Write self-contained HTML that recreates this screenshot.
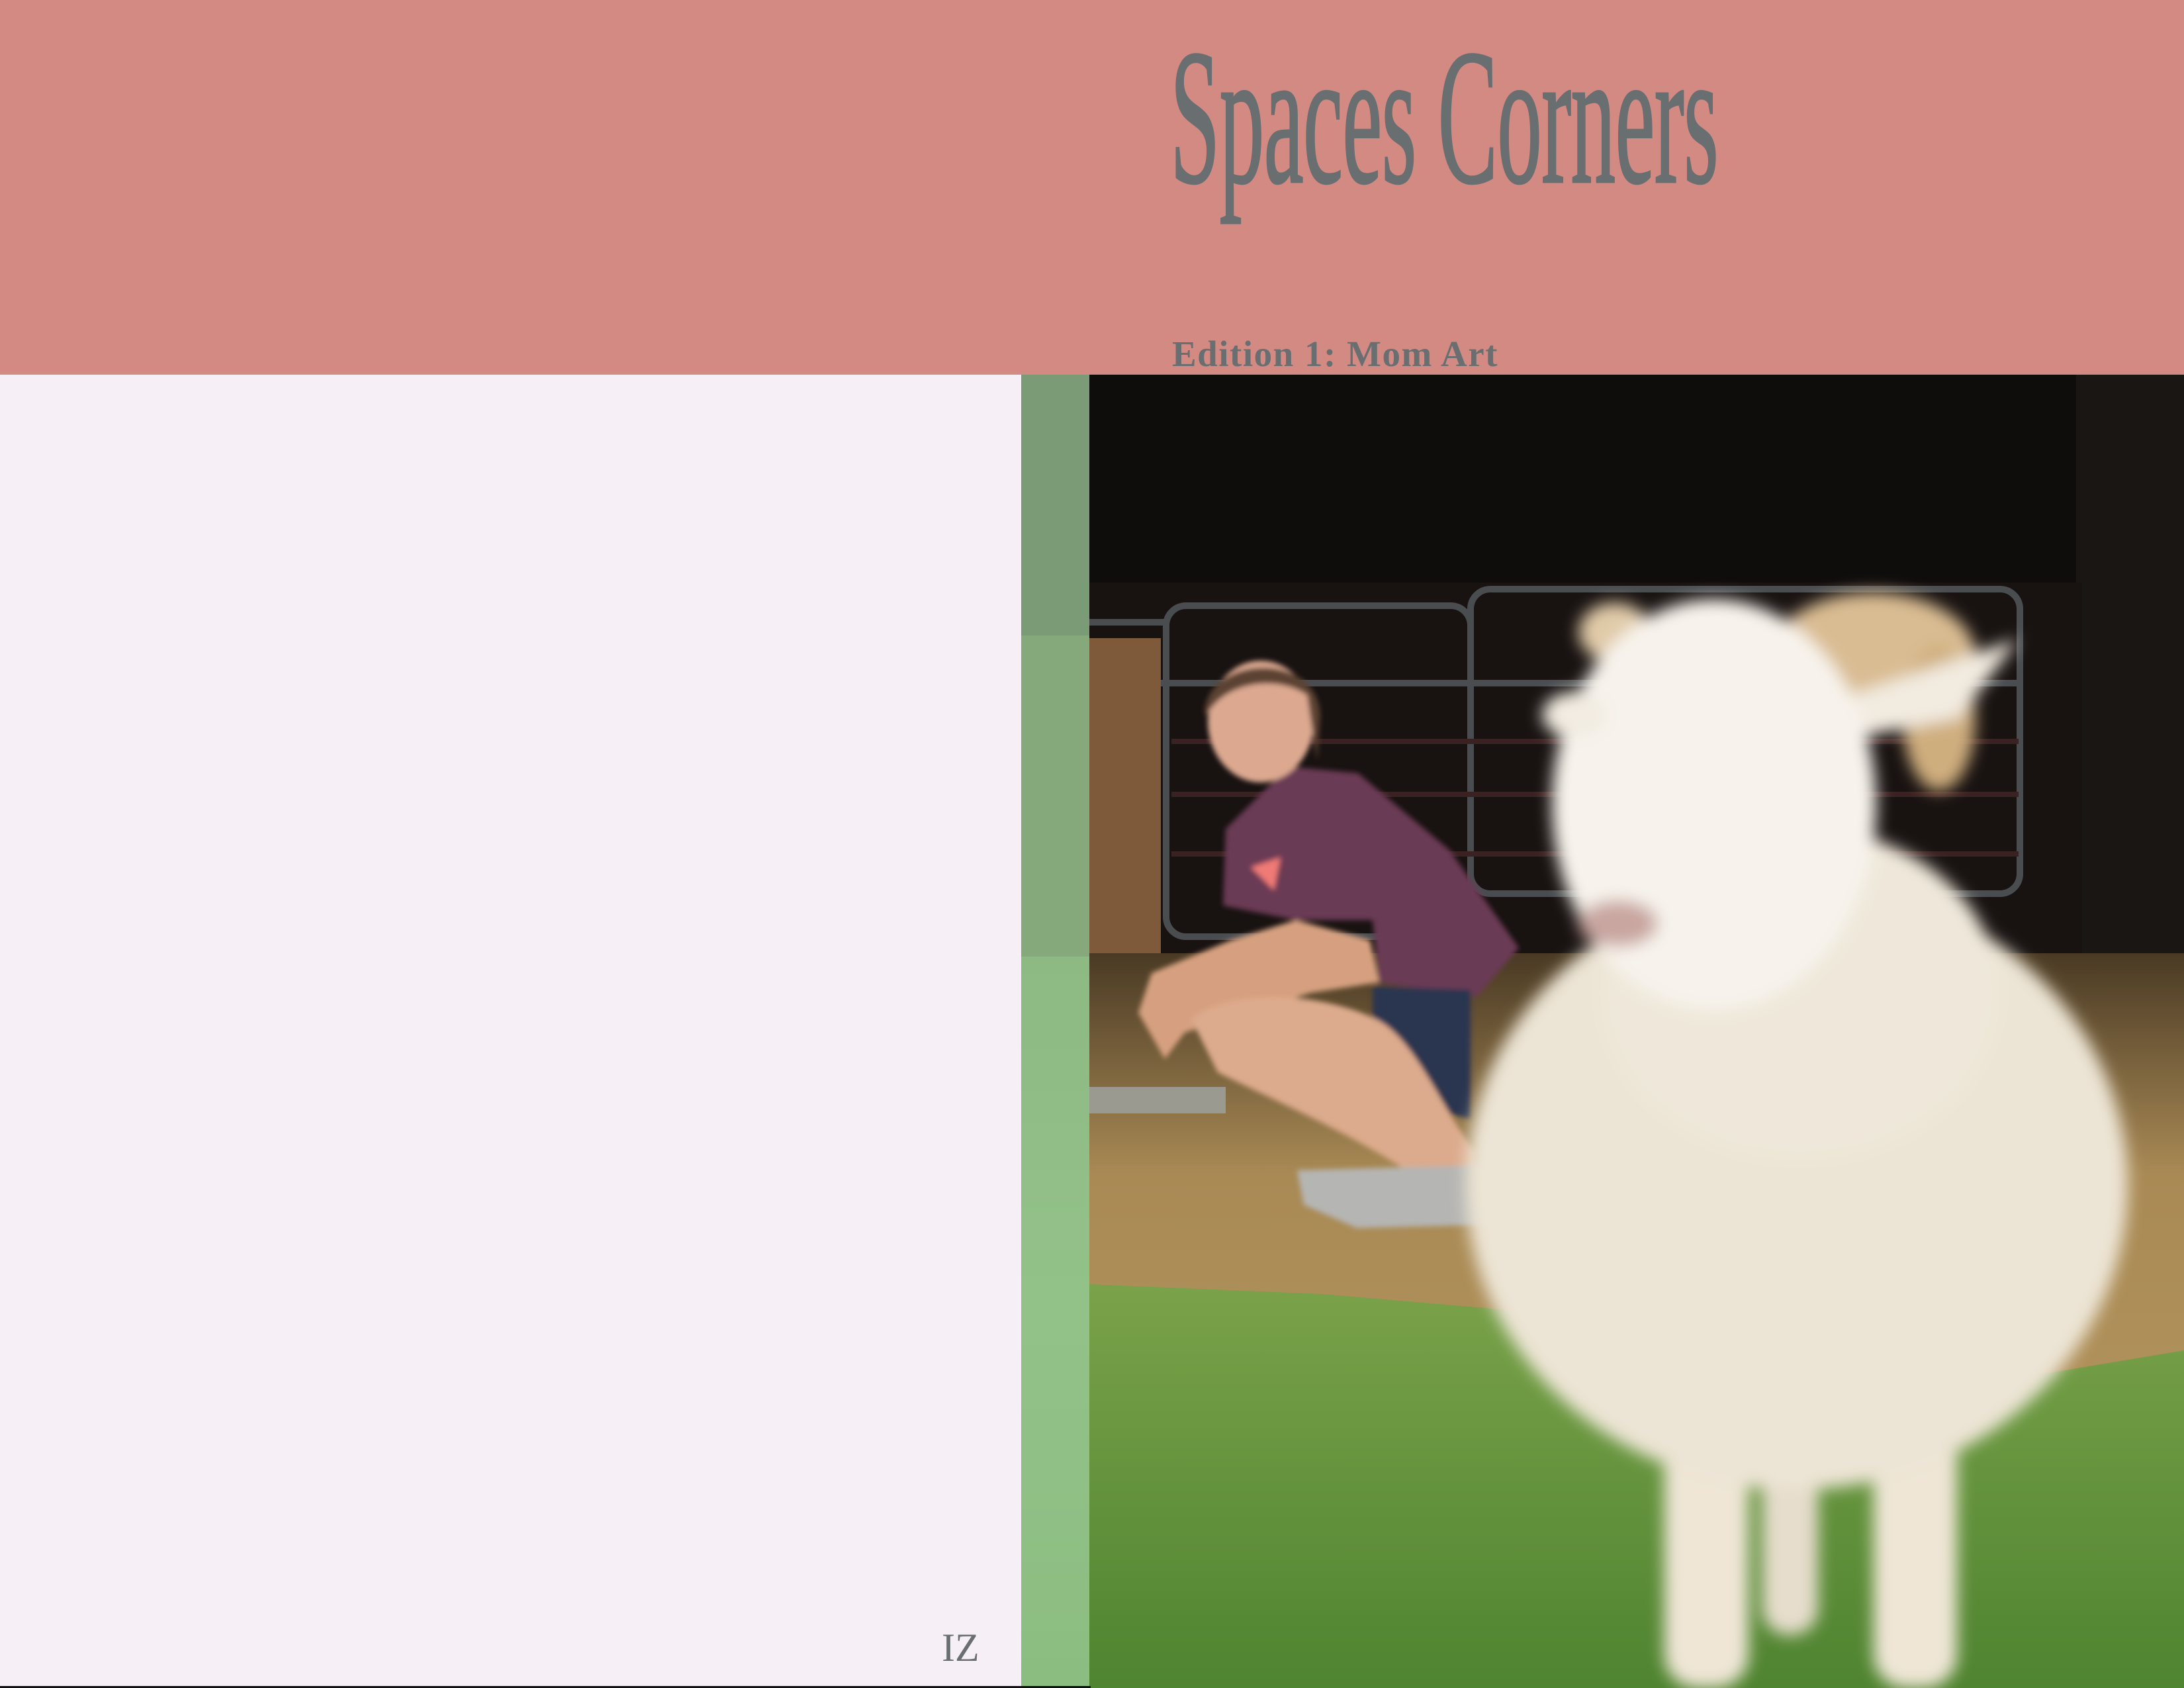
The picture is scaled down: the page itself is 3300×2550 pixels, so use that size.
<!DOCTYPE html>
<html><head><meta charset="utf-8"><style>
html,body{margin:0;padding:0}
body{width:3300px;height:2550px;position:relative;overflow:hidden;background:#F6EFF5;font-family:"Liberation Serif",serif}
.band{position:absolute;left:0;top:0;width:3300px;height:566px;background:#D38A83}
.title{position:absolute;left:1768px;top:32px;font-size:292px;line-height:1;color:#696E71;white-space:nowrap;transform:scaleX(0.465);transform-origin:0 0;letter-spacing:-2px;-webkit-text-stroke:3px #696E71}
.ed{position:absolute;left:1771px;top:507px;font-size:55px;font-weight:bold;color:#696E71;white-space:nowrap;line-height:1;letter-spacing:1.5px}
.iz{position:absolute;left:1423px;top:2459px;font-size:60px;color:#696E71;line-height:1}
.strip{position:absolute;left:1543px;top:566px;width:103px;height:1984px;background:linear-gradient(#7A9B76 0,#7A9B76 394px,#85A97B 394px,#85A97B 879px,#8DB983 879px,#93C289 1400px,#8CBD80 1984px)}
.photo{position:absolute;left:1646px;top:566px}
.line{position:absolute;left:0;top:2547px;width:1648px;height:3px;background:#111}
</style></head><body>
<div class="band"></div>
<div class="title">Spaces Corners</div>
<div class="ed">Edition 1: Mom Art</div>
<div class="iz">IZ</div>
<div class="strip"></div>
<svg class="photo" width="1654" height="1984" viewBox="1646 566 1654 1984">
<defs>
<filter id="b" x="-20%" y="-20%" width="140%" height="140%"><feGaussianBlur stdDeviation="12"/></filter>
<filter id="s" x="-20%" y="-20%" width="140%" height="140%"><feGaussianBlur stdDeviation="4"/></filter>
<linearGradient id="gr" x1="0" y1="0" x2="0" y2="1"><stop offset="0" stop-color="#7aa24a"/><stop offset="1" stop-color="#4f8430"/></linearGradient>
<linearGradient id="st" x1="0" y1="0" x2="0" y2="1"><stop offset="0" stop-color="#4a3a24"/><stop offset=".3" stop-color="#a98a55"/><stop offset="1" stop-color="#b99a62"/></linearGradient>
</defs>
<rect x="1646" y="566" width="1654" height="1984" fill="#0f0d0c"/>
<rect x="3137" y="566" width="163" height="900" fill="#1a1613"/>
<rect x="1646" y="880" width="1500" height="560" fill="#181211"/>
<g fill="none" stroke="#4a4d50" stroke-width="10">
<rect x="1762" y="915" width="460" height="500" rx="30"/>
<rect x="2222" y="890" width="830" height="460" rx="30"/>
<line x1="1646" y1="1032" x2="3050" y2="1032"/>
<line x1="1646" y1="940" x2="1762" y2="940"/>
</g>
<g stroke="#3a2222" stroke-width="8">
<line x1="1770" y1="1120" x2="3050" y2="1120"/><line x1="1770" y1="1200" x2="3050" y2="1200"/><line x1="1770" y1="1290" x2="3050" y2="1290"/>
</g>
<rect x="1646" y="964" width="108" height="484" fill="#7e5a3a"/>
<rect x="1646" y="1440" width="1654" height="1110" fill="url(#st)"/>
<rect x="1646" y="1642" width="206" height="40" fill="#9a9a90"/>
<path d="M1646 1940 L2000 1955 L2350 1985 L2600 2150 L3000 2090 L3300 2040 L3300 2550 L1646 2550 Z" fill="url(#gr)"/>
<g filter="url(#s)">
<path d="M1852 1252 L1947 1158 L2052 1168 L2190 1284 L2295 1432 L2232 1505 L2084 1484 L2074 1390 L1958 1390 L1848 1368 Z" fill="#6b3a55"/>
<path d="M1890 1310 L1935 1295 L1925 1345 Z" fill="#f07a76"/>
<path d="M2074 1490 L2222 1495 L2222 1690 L2130 1670 L2074 1560 Z" fill="#2c3650"/>
<path d="M1958 1390 L1860 1420 L1740 1470 L1720 1530 L1760 1600 L1790 1560 L1980 1500 L2084 1484 L2070 1420 Z" fill="#d6a080"/>
<path d="M1800 1540 C1860 1490 2000 1500 2080 1540 C2140 1570 2180 1680 2230 1740 L2230 1780 L2150 1785 C2060 1720 1920 1660 1840 1620 Z" fill="#dcaa8c"/>
<path d="M1960 1768 L2240 1760 L2250 1850 L2050 1855 L1970 1820 Z" fill="#b5b5b3"/>
<ellipse cx="1905" cy="1090" rx="80" ry="92" fill="#dca890"/>
<path d="M1820 1080 C1820 990 1990 980 1995 1080 L1990 1150 L1975 1050 C1930 1020 1860 1030 1830 1070 Z" fill="#5c4230"/>
</g>
<g filter="url(#b)">
<rect x="2515" y="2080" width="127" height="470" rx="50" fill="#efe6d6"/>
<rect x="2663" y="2080" width="84" height="390" rx="40" fill="#e6ddcc"/>
<rect x="2831" y="2080" width="126" height="470" rx="50" fill="#efe6d6"/>
<ellipse cx="2715" cy="1790" rx="500" ry="460" fill="#ece4d4"/>
<ellipse cx="2720" cy="1500" rx="300" ry="250" fill="#efe8da"/>
<ellipse cx="2830" cy="990" rx="155" ry="95" fill="#d9bc92"/>
<ellipse cx="2930" cy="1085" rx="55" ry="110" fill="#cfae7e"/>
<ellipse cx="2440" cy="955" rx="55" ry="45" fill="#e0caa8"/>
<path d="M2780 1055 L3050 965 L2960 1085 L2800 1115 Z" fill="#f2ebe0"/>
<ellipse cx="2590" cy="1215" rx="245" ry="310" fill="#f7f3ec"/>
<ellipse cx="2380" cy="1080" rx="50" ry="35" fill="#f2ece2"/>
<ellipse cx="2445" cy="1395" rx="60" ry="35" fill="#c9a6a0"/>
</g>
</svg>
<div class="line"></div>
</body></html>
